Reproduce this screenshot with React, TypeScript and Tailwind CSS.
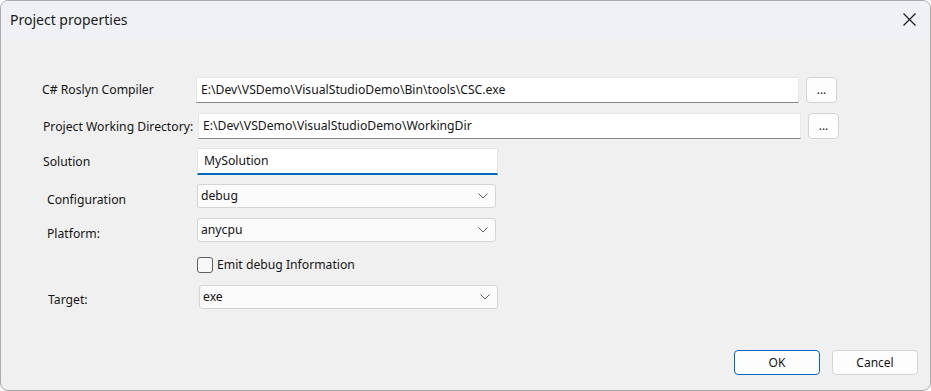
import React from 'react';

const font = "font-['Segoe_UI','Noto_Sans','Open_Sans',sans-serif]";

const Chevron = () => (
  <svg width="10" height="6" viewBox="0 0 10 6" className="shrink-0">
    <path d="M0.5 0.5 L5 5 L9.5 0.5" fill="none" stroke="#5c5c5c" strokeWidth="1" />
  </svg>
);

const Select = ({ value, w }: { value: string; w: string }) => (
  <div className={`${w} h-[24px] flex items-center justify-between pl-[3px] pr-[7px] bg-[#fbfbfb] border border-[#d4d4d4] rounded-[3px]`}>
    <span>{value}</span>
    <Chevron />
  </div>
);

const Browse = () => (
  <button className="w-[31px] h-[26px] ml-[7px] bg-[#fdfdfd] border border-[#d3d3d3] rounded-[4px] flex items-center justify-center text-[12px] text-[#1b1b1b]">
    ...
  </button>
);

export default function App() {
  return (
    <div className={`w-[931px] h-[391px] bg-white ${font} text-[12.2px] text-[#141414]`}>
      <div className="w-full h-full flex flex-col rounded-[8px] border border-[#a9a9a9] overflow-hidden bg-[#f0f0f0]">
        {/* Title bar */}
        <div className="h-[37px] shrink-0 bg-[#eff1f7] flex items-center justify-between pl-[9px] pr-[14px]">
          <span className="text-[14px] text-[#1a1a1a]">Project properties</span>
          <svg width="13" height="13" viewBox="0 0 13 13">
            <path d="M0.5 0.5 L12.5 12.5 M12.5 0.5 L0.5 12.5" stroke="#1a1a1a" strokeWidth="1.2" />
          </svg>
        </div>

        {/* Body */}
        <div className="flex-1 flex flex-col pt-[39px]">
          {/* C# Roslyn Compiler */}
          <div className="flex items-start h-[26px]">
            <div className="w-[195px] pl-[41px] mt-[5px] leading-[16px]">C# Roslyn Compiler</div>
            <div className="w-[603px] h-[26px] bg-white border border-[#e6e6e6] border-b-[#868686] flex items-center pl-[4px]">
              E:\Dev\VSDemo\VisualStudioDemo\Bin\tools\CSC.exe
            </div>
            <Browse />
          </div>

          {/* Working dir */}
          <div className="flex items-start h-[26px] mt-[10px]">
            <div className="w-[197px] pl-[42px] mt-[6px] leading-[16px]">Project Working Directory:</div>
            <div className="w-[603px] h-[26px] bg-white border border-[#e6e6e6] border-b-[#868686] flex items-center pl-[4px]">
              E:\Dev\VSDemo\VisualStudioDemo\WorkingDir
            </div>
            <Browse />
          </div>

          {/* Solution */}
          <div className="flex items-start h-[27px] mt-[9px]">
            <div className="w-[196px] pl-[42px] mt-[6px] leading-[16px]">Solution</div>
            <div className="w-[301px] h-[27px] bg-white border border-[#e6e6e6] border-b-2 border-b-[#0067c0] flex items-center pl-[6px]">
              MySolution
            </div>
          </div>

          {/* Configuration */}
          <div className="flex items-start h-[24px] mt-[9px]">
            <div className="w-[196px] pl-[46px] mt-[8px] leading-[16px]">Configuration</div>
            <Select value="debug" w="w-[299px]" />
          </div>

          {/* Platform */}
          <div className="flex items-start h-[24px] mt-[10px]">
            <div className="w-[196px] pl-[46px] mt-[8px] leading-[16px]">Platform:</div>
            <Select value="anycpu" w="w-[299px]" />
          </div>

          {/* Checkbox */}
          <div className="flex items-center h-[16px] mt-[15px] pl-[196px]">
            <div className="w-[16px] h-[16px] border border-[#5f5f5f] rounded-[3px] bg-[#f8f8f8]" />
            <span className="ml-[4px]">Emit debug Information</span>
          </div>

          {/* Target */}
          <div className="flex items-start h-[24px] mt-[12px]">
            <div className="w-[198px] pl-[47px] mt-[7px] leading-[16px]">Target:</div>
            <Select value="exe" w="w-[299px]" />
          </div>

          {/* Footer buttons */}
          <div className="flex justify-end gap-[12px] pr-[12px] mt-[41px]">
            <button className="w-[86px] h-[25px] bg-[#fdfdfd] border border-[#0067c0] rounded-[4px] text-[12px]">OK</button>
            <button className="w-[86px] h-[25px] bg-[#fdfdfd] border border-[#d3d3d3] rounded-[4px] text-[12px]">Cancel</button>
          </div>
        </div>
      </div>
    </div>
  );
}
